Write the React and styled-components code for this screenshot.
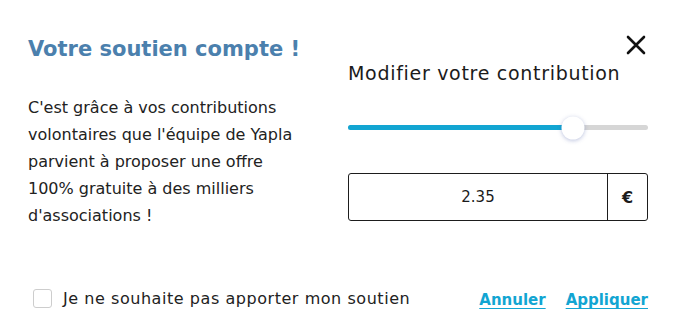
import styled, { createGlobalStyle } from "styled-components";

const GlobalStyle = createGlobalStyle`
  body {
    margin: 0;
    background: #ffffff;
    font-family: "DejaVu Sans", "Open Sans", sans-serif;
  }
`

const Dialog = styled.div`
  width: 673px;
  height: 335px;
  box-sizing: border-box;
  padding: 34px 25px 0 28px;
  position: relative;
  display: flex;
  flex-direction: column;
`

const Body = styled.div`
  display: grid;
  grid-template-columns: 320px 300px;
`

const Title = styled.h2`
  margin: 0;
  font-size: 21px;
  font-weight: 700;
  color: #4b80ad;
  line-height: 30px;
`

const Text = styled.p`
  margin: 30px 0 0;
  font-size: 16px;
  line-height: 27px;
  color: #222;
`

const Right = styled.div`
  padding-top: 26px;
`

const Label = styled.div`
  font-size: 19px;
  letter-spacing: 0.7px;
  color: #1b1b1b;
  line-height: 26px;
`

const CloseButton = styled.button`
  position: absolute;
  top: 32px;
  right: 24px;
  width: 26px;
  height: 26px;
  padding: 0;
  border: none;
  background: none;
  display: grid;
  place-content: center;
  cursor: pointer;
`

const Slider = styled.div`
  position: relative;
  margin-top: 39px;
  height: 5px;
  border-radius: 3px;
  background: #d6d6d6;
`

const SliderFill = styled.div`
  height: 100%;
  border-radius: 3px;
  background: #12a5d2;
`

const Thumb = styled.div`
  position: absolute;
  top: 50%;
  width: 23px;
  height: 23px;
  border-radius: 50%;
  background: #fff;
  box-shadow: 0 1px 4px rgb(60 80 160 / 35%);
  transform: translate(-50%, -50%);
`

const AmountBox = styled.div`
  margin-top: 43px;
  height: 48px;
  border: 1px solid #1d1d1d;
  border-radius: 3px;
  display: flex;
  box-sizing: border-box;
`

const AmountValue = styled.div`
  flex: 1;
  display: grid;
  place-content: center;
  font-size: 15px;
  color: #1b1b1b;
`

const Currency = styled.div`
  width: 39px;
  border-left: 1px solid #1d1d1d;
  display: grid;
  place-content: center;
  font-size: 16px;
  font-weight: 700;
  color: #1b1b1b;
`

const Footer = styled.div`
  margin-top: 58px;
  display: flex;
  align-items: center;
  padding-left: 5px;
`

const CheckLabel = styled.label`
  display: flex;
  align-items: center;
  gap: 11px;
  font-size: 16px;
  letter-spacing: 0.55px;
  color: #222;
  flex: 1;
`

const Box = styled.span`
  width: 19px;
  height: 19px;
  box-sizing: border-box;
  border: 1px solid #cdcdcd;
  border-radius: 3px;
`

const Actions = styled.div`
  display: flex;
  gap: 20px;
  margin-top: 4px;
`

const LinkButton = styled.a`
  font-size: 15px;
  font-weight: 700;
  color: #12a5d2;
  text-decoration: underline;
  text-underline-offset: 3px;
  cursor: pointer;
`

const App = () => {
  const percent = 75;
  return (
    <>
      <GlobalStyle />
      <Dialog>
        <CloseButton aria-label="Fermer">
          <svg width="20" height="20" viewBox="0 0 20 20">
            <path d="M2 2 L18 18 M18 2 L2 18" stroke="#111" strokeWidth="2.6" strokeLinecap="round" />
          </svg>
        </CloseButton>
        <Body>
          <div>
            <Title>Votre soutien compte !</Title>
            <Text>
              C'est grâce à vos contributions<br />
              volontaires que l'équipe de Yapla<br />
              parvient à proposer une offre<br />
              100% gratuite à des milliers<br />
              d'associations !
            </Text>
          </div>
          <Right>
            <Label>Modifier votre contribution</Label>
            <Slider>
              <SliderFill style={{ width: `${percent}%` }} />
              <Thumb style={{ left: `${percent}%` }} />
            </Slider>
            <AmountBox>
              <AmountValue>2.35</AmountValue>
              <Currency>€</Currency>
            </AmountBox>
          </Right>
        </Body>
        <Footer>
          <CheckLabel>
            <Box />
            Je ne souhaite pas apporter mon soutien
          </CheckLabel>
          <Actions>
            <LinkButton>Annuler</LinkButton>
            <LinkButton>Appliquer</LinkButton>
          </Actions>
        </Footer>
      </Dialog>
    </>
  );
}

export default App;
